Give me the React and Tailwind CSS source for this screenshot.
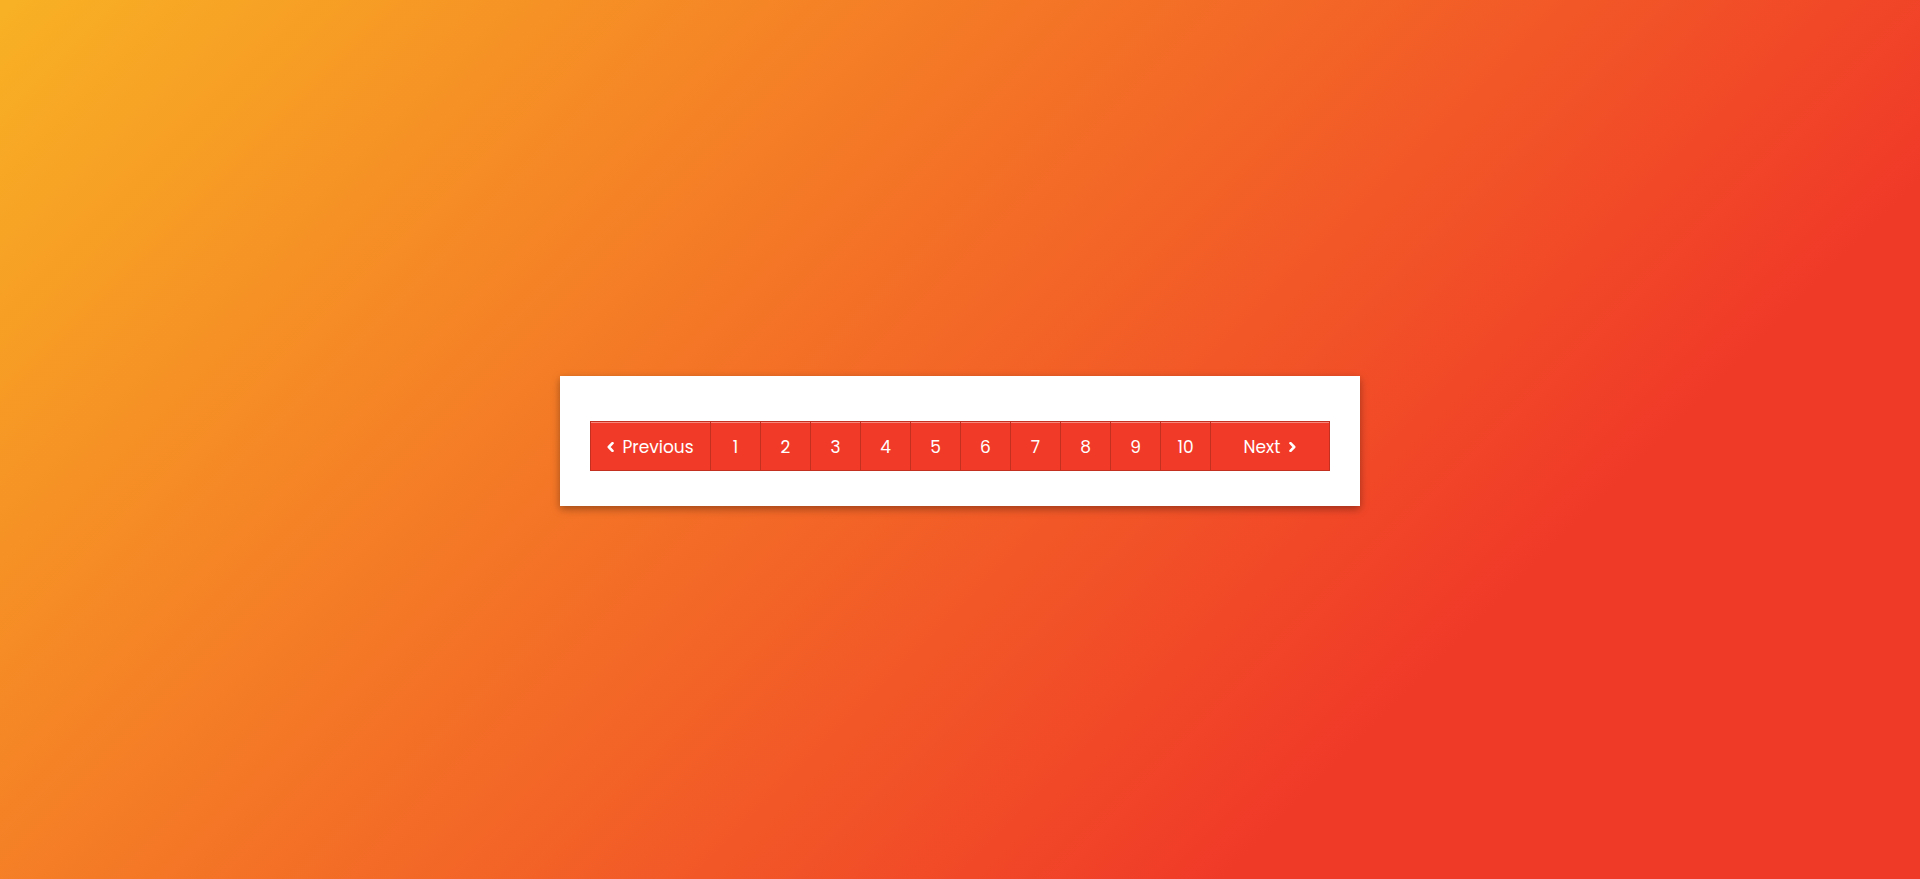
import React from "react";

function Chevron({ dir }) {
  return (
    <svg width="7" height="10" viewBox="0 0 7 10" className="-mt-[2px]">
      <polyline
        points={dir === "left" ? "5.5,1.2 1.8,5 5.5,8.8" : "1.5,1.2 5.2,5 1.5,8.8"}
        fill="none"
        stroke="white"
        strokeWidth="2.6"
        strokeLinecap="round"
        strokeLinejoin="round"
      />
    </svg>
  );
}

export default function App() {
  const pages = [1, 2, 3, 4, 5, 6, 7, 8, 9, 10];
  return (
    <div
      className="w-full h-[879px] flex items-center justify-center bg-[linear-gradient(135deg,#f8b124_0%,#f03a28_75%)]"
      style={{ fontFamily: 'Poppins, "Open Sans", sans-serif' }}
    >
      <div className="w-[800px] h-[130px] mt-[2px] bg-white pt-[45px] px-[30px] shadow-[0_3px_8px_rgba(0,0,0,0.35)]">
        <ul className="flex h-[50px] border border-[#c3301f]">
          <li className="w-[119px] h-full flex items-center justify-center gap-[8px] pt-[4px] bg-[#f23a28] text-white text-[17px] shadow-[inset_0_1px_0_rgba(255,255,255,0.4)]">
            <Chevron dir="left" />
            <span>Previous</span>
          </li>
          {pages.map((p) => (
            <li
              key={p}
              className="w-[50px] h-full flex items-center justify-center pt-[4px] border-l border-[#c3301f] bg-[#f23a28] text-white text-[17px] shadow-[inset_0_1px_0_rgba(255,255,255,0.4)]"
            >
              {p}
            </li>
          ))}
          <li className="flex-1 h-full flex items-center justify-center gap-[9px] pt-[4px] border-l border-[#c3301f] bg-[#f23a28] text-white text-[17px] shadow-[inset_0_1px_0_rgba(255,255,255,0.4)]">
            <span>Next</span>
            <Chevron dir="right" />
          </li>
        </ul>
      </div>
    </div>
  );
}
